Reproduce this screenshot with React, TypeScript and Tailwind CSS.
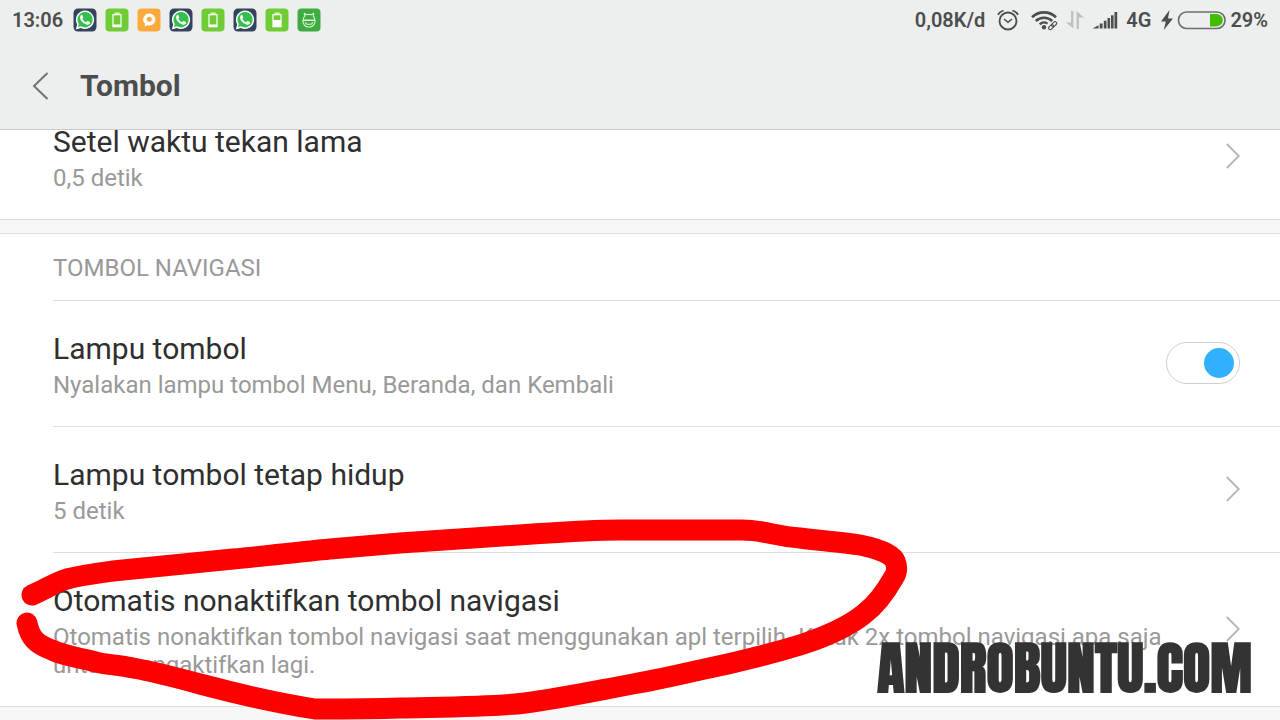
import { useState } from "react";

type AppIconKind = "whatsapp" | "battery" | "chat" | "batteryHalf" | "android";

type Row = {
  title: string;
  detail: string;
  kind: "link" | "toggle";
};

const NOTIFICATIONS: AppIconKind[] = [
  "whatsapp",
  "battery",
  "chat",
  "whatsapp",
  "battery",
  "whatsapp",
  "batteryHalf",
  "android",
];

const NAV_ROWS: Row[] = [
  {
    title: "Lampu tombol",
    detail: "Nyalakan lampu tombol Menu, Beranda, dan Kembali",
    kind: "toggle",
  },
  { title: "Lampu tombol tetap hidup", detail: "5 detik", kind: "link" },
  {
    title: "Otomatis nonaktifkan tombol navigasi",
    detail:
      "Otomatis nonaktifkan tombol navigasi saat menggunakan apl terpilih. Ketuk 2x tombol navigasi apa saja untuk mengaktifkan lagi.",
    kind: "link",
  },
];

function AppIcon({ kind }: { kind: AppIconKind }) {
  if (kind === "whatsapp") {
    return (
      <svg viewBox="0 0 24 24" className="size-6" aria-hidden="true">
        <rect x="0.5" y="0.5" width="23" height="23" rx="4.5" fill="#34435c" />
        <path
          d="M12.2 2.4a9.3 9.3 0 0 0-8 14L2.8 21.4l5-1.3a9.3 9.3 0 1 0 4.4-17.7z"
          fill="#fff"
        />
        <path
          d="M12.2 4a7.7 7.7 0 0 0-6.4 12l-.8 3.1 3.1-.8A7.7 7.7 0 1 0 12.2 4z"
          fill="#35bf4b"
        />
        <path
          d="M9.4 7.3c-.3-.5-1-.4-1.4 0-2 2.1-.5 5 2 7.3 2.4 2.1 5.1 3 6.7 1.2.5-.6.4-1.3-.2-1.7l-1.7-1c-.5-.2-.8 0-1.1.4l-.6.8c-1.8-.7-3.1-1.9-3.8-3.5l.7-.8c.3-.3.3-.6.1-1z"
          fill="#fff"
        />
      </svg>
    );
  }
  if (kind === "chat") {
    return (
      <svg viewBox="0 0 24 24" className="size-6" aria-hidden="true">
        <rect x="0.5" y="0.5" width="23" height="23" rx="4" fill="#fda93b" />
        <path
          d="M12.1 5.5a6 6 0 0 0-4.1 10.3l-.4 2.7 3-1.3a6 6 0 1 0 1.5-11.7z"
          fill="#fff"
        />
        <circle cx="12.3" cy="11.3" r="2.5" fill="#fda93b" />
      </svg>
    );
  }
  if (kind === "android") {
    return (
      <svg viewBox="0 0 24 24" className="size-6" aria-hidden="true">
        <rect x="0.5" y="0.5" width="23" height="23" rx="4" fill="#3fac42" />
        <g fill="none" stroke="#d9f5d5" strokeWidth="1.1" strokeLinejoin="round">
          <path d="M6.2 12c0-1.5.6-2.8 1.5-3.8L7.3 5.3l2.5 1.4a7 7 0 0 1 4.4 0l2.5-1.4-.4 2.9c.9 1 1.5 2.3 1.5 3.8z" />
          <path d="M5.9 12.5h12.2c.4 4-2.7 6.5-6.1 6.5s-6.5-2.5-6.1-6.5z" />
          <path d="M8 14.3l2 2h4l2-2" />
        </g>
      </svg>
    );
  }
  return (
    <svg viewBox="0 0 24 24" className="size-6" aria-hidden="true">
      <rect x="0.5" y="0.5" width="23" height="23" rx="4" fill="#70cc35" />
      <path d="M9.5 5.2h5" stroke="#fff" strokeWidth="1.2" />
      <rect x="8" y="6.7" width="8" height="12" fill="none" stroke="#fff" strokeWidth="1.2" />
      {kind === "battery" ? (
        <path d="M8 16.5h8v2.2H8z" fill="#fff" />
      ) : (
        <path d="M8 12h8v6.7H8z" fill="#fff" />
      )}
    </svg>
  );
}

function AlarmIcon() {
  return (
    <svg viewBox="0 0 22 22" className="h-[22px] w-[22px]" fill="none" stroke="currentColor" aria-hidden="true">
      <circle cx="11" cy="12" r="8.5" strokeWidth="1.8" />
      <path d="M7 10l4 3.3 4-3.3" strokeWidth="1.6" />
      <path d="M.9 5.8A9 9 0 0 1 6.5 1.500M21.100 5.800a9 9 0 0 0-5.600-4.300" strokeWidth="1.8" />
    </svg>
  );
}

function WifiIcon() {
  return (
    <svg viewBox="0 0 27 22" className="h-[22px] w-[27px]" fill="none" stroke="currentColor" aria-hidden="true">
      <path d="M1 8.3a17 17 0 0 1 24 0" strokeWidth="2.7" />
      <path d="M4.8 12a11.7 11.7 0 0 1 16.4 0" strokeWidth="2.5" />
      <path d="M8.7 15.4a6.3 6.3 0 0 1 7.8-.8" strokeWidth="2.3" />
      <circle cx="13" cy="18.3" r="2.2" fill="currentColor" stroke="none" />
      <g transform="rotate(-45 21.5 16.5)" strokeWidth="1.1">
        <rect x="16.5" y="15" width="5.8" height="3.4" rx="1.7" />
        <rect x="20.7" y="15" width="5.8" height="3.4" rx="1.7" />
      </g>
    </svg>
  );
}

function DataIcon() {
  return (
    <svg viewBox="0 0 18 20" className="h-5 w-[18px] text-[#bfc1c0]" aria-hidden="true">
      <path d="M5 1h2.4v17.5L0 12.5h5zM10.6 19H13V7.5h5L10.6 1z" fill="currentColor" />
    </svg>
  );
}

function SignalIcon() {
  return (
    <svg viewBox="0 0 25 18" className="h-[18px] w-[26px]" fill="currentColor" aria-hidden="true">
      <path d="M0 17.5l6-3.3v3.3zM7.2 12.5h2.9v5H7.2zM11.3 9.8H14v7.7h-2.700zM15 7h2.600v10.500H15zM18.500 4.200h2.600v13.300h-2.600zM22 1h2.700v16.500H22z" />
    </svg>
  );
}

function BatteryIcon() {
  return (
    <svg viewBox="0 0 67 20" className="h-5 w-[67px]" aria-hidden="true">
      <path d="M10.5 0L2 11.5h4.800L4.800 20 14 8.500H9z" fill="#4c4e4d" />
      <rect x="19.5" y="2" width="46.500" height="16.500" rx="8" fill="none" stroke="#6c6e6d" strokeWidth="1.600" />
      <path d="M51 4h6.500a6.200 6.200 0 0 1 0 12.400H51z" fill="#42bd00" />
    </svg>
  );
}

function Chevron() {
  return (
    <svg
      viewBox="0 0 14 26"
      className="h-[26px] w-3.5 shrink-0"
      fill="none"
      stroke="#b4b4b4"
      strokeWidth="1.8"
      aria-hidden="true"
    >
      <path d="M.8 1l12 12-12 12" />
    </svg>
  );
}

function StatusBar() {
  return (
    <div className="flex h-10 items-center justify-between px-3 text-xl font-semibold text-[#4c4e4d]">
      <div className="flex items-center gap-2">
        <span className="mr-0.5">13:06</span>
        {NOTIFICATIONS.map((kind, i) => (
          <AppIcon key={i} kind={kind} />
        ))}
      </div>
      <div className="flex items-center gap-2">
        <span className="mr-1">0,08K/d</span>
        <AlarmIcon />
        <span className="ml-1">
          <WifiIcon />
        </span>
        <DataIcon />
        <SignalIcon />
        <span>4G</span>
        <div className="flex items-center gap-1">
          <BatteryIcon />
          <span>29%</span>
        </div>
      </div>
    </div>
  );
}

function RowText({ title, detail }: { title: string; detail: string }) {
  return (
    <span className="min-w-0 flex-1 text-left">
      <span className="block text-[30px] leading-11 text-[#2f2f2f]">{title}</span>
      <span className="block text-2xl leading-7 text-[#999]">{detail}</span>
    </span>
  );
}

function SettingRow({ row, divider }: { row: Row; divider?: boolean }) {
  const [on, setOn] = useState(true);
  const rowClass = "flex w-full items-center gap-10 pt-[26px] pr-10 pb-[27px]";

  return (
    <li className={divider ? "ml-[53px] border-b border-[#dfdfdf]" : "border-b border-[#dfdfdf] pl-[53px]"}>
      {row.kind === "toggle" ? (
        <label className={rowClass}>
          <RowText title={row.title} detail={row.detail} />
          <input
            type="checkbox"
            role="switch"
            checked={on}
            onChange={(e) => setOn(e.target.checked)}
            className="flex h-[42px] w-[74px] shrink-0 appearance-none items-center rounded-full border border-[#cfcfd4] bg-white px-[5px] before:block before:size-[30px] before:rounded-full before:bg-[#cfcfcf] checked:justify-end checked:before:bg-[#30b0ff]"
          />
        </label>
      ) : (
        <button type="button" className={rowClass}>
          <RowText title={row.title} detail={row.detail} />
          <Chevron />
        </button>
      )}
    </li>
  );
}

// freehand loop drawn round the last setting
function Scribble() {
  return (
    <svg
      width="1280"
      height="720"
      viewBox="0 0 1280 720"
      className="pointer-events-none absolute top-0 left-0"
      fill="none"
      stroke="#fe0000"
      strokeWidth="21"
      strokeLinecap="round"
      strokeLinejoin="round"
      aria-hidden="true"
    >
      <path d="M32 595C46 589 54 583 67 579C82 575 98 573 113 571C153 567 193 563 233 559C266 556 298 552 330 549C353 547 376 545 400 543C445 540 490 537 533 534C562 532 590 530 620 530H742C763 530 775 536 800 538C822 541 842 542 860 545C880 549 893 555 895 561C897 566 898 571 894 577C885 593 876 605 864 614C848 627 825 637 800 645C767 655 735 663 700 670C678 675 656 680 633 684C595 691 562 698 525 703C495 707 440 707 400 708C370 709 345 709 315 709C277 703 238 694 200 684C178 678 156 672 133 668C120 665 110 665 100 663C82 658 64 656 52 650C36 644 30 638 27 623" />
    </svg>
  );
}

export default function App() {
  return (
    <div className="relative flex h-screen flex-col overflow-hidden bg-[#f7f7f7] font-['Roboto','Noto_Sans',sans-serif]">
      <header className="shrink-0 border-b border-[#c9cbca] bg-[#edefee]">
        <StatusBar />
        <div className="flex h-[89px] items-center gap-8 px-8 pt-0.5">
          <button type="button" aria-label="Kembali">
            <svg viewBox="0 0 16 28" className="h-7 w-4" fill="none" stroke="#737574" strokeWidth="2" aria-hidden="true">
              <path d="M15.5 1L2 14l13.5 13" />
            </svg>
          </button>
          <h1 className="text-[30px] leading-9 font-bold text-[#4c4e4d]">Tombol</h1>
        </div>
      </header>

      <main className="min-h-0 flex-1 overflow-hidden">
        {/* list is scrolled a little way under the header */}
        <ul className="-mt-9 bg-white">
          <SettingRow row={{ title: "Setel waktu tekan lama", detail: "0,5 detik", kind: "link" }} />
        </ul>

        <section className="mt-[13px] border-t border-[#dfdfdf] bg-white">
          <h2 className="ml-[53px] border-b border-[#dfdfdf] pt-[18px] pb-4 text-2xl leading-8 text-[#999]">
            TOMBOL NAVIGASI
          </h2>
          <ul>
            {NAV_ROWS.map((row, i) => (
              <SettingRow key={row.title} row={row} divider={i < NAV_ROWS.length - 1} />
            ))}
          </ul>
        </section>
      </main>

      <Scribble />
      <p className="pointer-events-none absolute right-7 bottom-5 font-['Impact','Anton','Liberation_Sans_Narrow',sans-serif] text-[56px] leading-16 font-black text-[#333]">
        ANDROBUNTU.COM
      </p>
    </div>
  );
}
